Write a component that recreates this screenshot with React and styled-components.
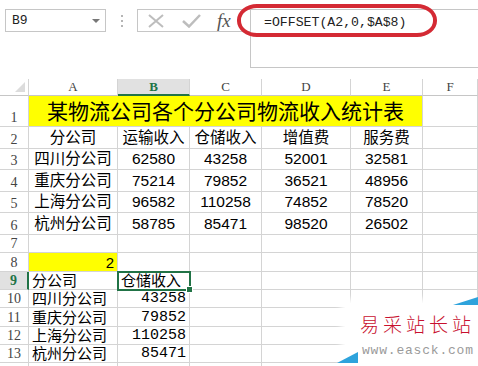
import React from 'react';
import styled, { createGlobalStyle } from 'styled-components';

const SANS = '"Liberation Sans", "Noto Sans CJK SC", sans-serif';
const MONO = '"Liberation Mono", "Noto Sans CJK SC", monospace';
const GREEN = '#217346';
const GRID = '#d4d4d4';

const GlobalStyle = createGlobalStyle`
  body {
    margin: 0;
    background: #fff;
    overflow: hidden;
  }
`;

const Page = styled.div`
  position: relative;
  width: 478px;
  height: 366px;
  overflow: hidden;
  background: #fff;
`;

const TopBar = styled.div`
  display: flex;
  align-items: flex-start;
  height: 79px;
  padding: 9px 0 0 5px;
  box-sizing: border-box;
`;

const NameBox = styled.div`
  box-sizing: border-box;
  width: 101px;
  height: 23px;
  border: 1px solid #c6c6c6;
  display: flex;
  align-items: center;
  justify-content: space-between;
  padding: 0 5px 0 6px;
  font-family: ${MONO};
  font-size: 13px;
  color: #222;
`;

const DropArrow = styled.span`
  width: 0;
  height: 0;
  border-left: 4px solid transparent;
  border-right: 4px solid transparent;
  border-top: 4px solid #777;
`;

const Grip = styled.div`
  width: 31px;
  height: 23px;
  display: flex;
  flex-direction: column;
  align-items: center;
  justify-content: center;
  gap: 3px;

  span {
    width: 2px;
    height: 2px;
    background: #b5b5b5;
  }
`;

const FormulaArea = styled.div`
  flex: 1;
  display: flex;
  position: relative;
`;

const FxButtons = styled.div`
  box-sizing: border-box;
  width: 113px;
  height: 23px;
  border: 1px solid #c6c6c6;
  border-right: none;
  display: flex;
  align-items: center;
  padding-left: 10px;
  gap: 18px;
`;

const FxLabel = styled.span`
  font-family: "Liberation Serif", serif;
  font-style: italic;
  font-size: 19px;
  color: #555;
  margin-left: -2px;
`;

const FormulaInput = styled.div`
  box-sizing: border-box;
  flex: 1;
  height: 59px;
  border: 1px solid #c6c6c6;
  border-right: none;
  padding: 5px 0 0 13px;
  font-family: ${MONO};
  font-size: 13.2px;
  color: #222;
`;

const Annotation = styled.div`
  position: absolute;
  left: 100px;
  top: -5px;
  width: 200px;
  height: 33px;
  box-sizing: border-box;
  border: 4px solid #d42a34;
  border-radius: 20px / 16px;
`;

const Sheet = styled.div`
  display: grid;
  grid-template-columns: 29px 89px 72px 72px 89px 72px 55px;
  grid-template-rows: 17px 31px 22px 21px 22px 21px 22px 18px 19px 18px 18px 19px 18px 18px 18px;
`;

const Corner = styled.div`
  box-sizing: border-box;
  border-right: 1px solid ${GRID};
  border-bottom: 1px solid #c6c6c6;
  display: flex;
  align-items: flex-end;
  justify-content: flex-end;
  padding: 0 3px 3px 0;
`;

const ColHead = styled.div`
  box-sizing: border-box;
  display: flex;
  align-items: center;
  justify-content: center;
  border-right: 1px solid ${GRID};
  border-bottom: ${p => (p.$active ? `2px solid ${GREEN}` : '1px solid #c6c6c6')};
  background: ${p => (p.$active ? '#e1e1e1' : '#fff')};
  color: ${p => (p.$active ? GREEN : '#444')};
  font-weight: ${p => (p.$active ? 700 : 400)};
  font-family: "Liberation Serif", serif;
  font-size: 13px;
`;

const RowHead = styled.div`
  box-sizing: border-box;
  display: flex;
  align-items: flex-end;
  justify-content: center;
  padding-bottom: 1px;
  border-right: ${p => (p.$active ? `2px solid ${GREEN}` : `1px solid ${GRID}`)};
  border-bottom: 1px solid ${GRID};
  background: ${p => (p.$active ? '#e1e1e1' : '#fff')};
  color: ${p => (p.$active ? GREEN : '#444')};
  font-weight: ${p => (p.$active ? 700 : 400)};
  font-family: "Liberation Serif", serif;
  font-size: 14px;
  line-height: 1;
`;

const Cell = styled.div`
  position: relative;
  box-sizing: border-box;
  grid-column: span ${p => p.$span || 1};
  display: flex;
  align-items: center;
  justify-content: ${p =>
    p.$align === 'right' ? 'flex-end' : p.$align === 'left' ? 'flex-start' : 'center'};
  padding: 0 3px;
  border-right: 1px solid ${GRID};
  border-bottom: 1px solid ${GRID};
  background: ${p => p.$bg || '#fff'};
  font-family: ${p => (p.$mono ? MONO : SANS)};
  font-size: ${p => p.$size || 15.5}px;
  line-height: 1;
  color: #000;
  white-space: nowrap;
  overflow: hidden;
  ${p => p.$selected && `outline: 2px solid ${GREEN}; outline-offset: -1px; overflow: visible; z-index: 2;`}
`;

const FillHandle = styled.span`
  position: absolute;
  right: -4px;
  bottom: -4px;
  width: 5px;
  height: 5px;
  background: ${GREEN};
  border: 1px solid #fff;
`;

const Watermark = styled.div`
  position: absolute;
  left: 345px;
  top: 303px;
  width: 140px;
  height: 66px;
  background: #fff;
  box-shadow: 0 0 6px 4px #fff;
  z-index: 5;
`;

const MarkTitle = styled.div`
  position: absolute;
  left: 15px;
  top: 11px;
  font-family: "Noto Sans CJK SC", sans-serif;
  font-weight: 300;
  font-size: 19px;
  letter-spacing: 4px;
  color: #c8102e;
  line-height: 1;
`;

const MarkUrl = styled.div`
  position: absolute;
  left: 17px;
  top: 41px;
  font-family: "Liberation Mono", monospace;
  font-size: 13px;
  letter-spacing: 0.8px;
  color: #9a9a9a;
  line-height: 1;
`;

const Triangle = styled.svg`
  position: absolute;
  left: ${p => p.$x}px;
  top: ${p => p.$y}px;
`;

const columns = ['A', 'B', 'C', 'D', 'E', 'F'];

const summary = [
  ['分公司', '运输收入', '仓储收入', '增值费', '服务费'],
  ['四川分公司', '62580', '43258', '52001', '32581'],
  ['重庆分公司', '75214', '79852', '36521', '48956'],
  ['上海分公司', '96582', '110258', '74852', '78520'],
  ['杭州分公司', '58785', '85471', '98520', '26502'],
];

const lookup = [
  ['四川分公司', '43258'],
  ['重庆分公司', '79852'],
  ['上海分公司', '110258'],
  ['杭州分公司', '85471'],
];

const Empty = ({ n }) => Array.from({ length: n }, (_, i) => <Cell key={i} />);

export default function App() {
  return (
    <Page>
      <GlobalStyle />
      <TopBar>
        <NameBox>
          B9
          <DropArrow />
        </NameBox>
        <Grip>
          <span />
          <span />
          <span />
        </Grip>
        <FormulaArea>
          <FxButtons>
            <svg width="16" height="14" viewBox="0 0 16 14">
              <path d="M1 1 L15 13 M15 1 L1 13" stroke="#bdbdbd" strokeWidth="2" fill="none" />
            </svg>
            <svg width="19" height="14" viewBox="0 0 19 14">
              <path d="M1 7 L7 12.5 L18 1" stroke="#bdbdbd" strokeWidth="2.5" fill="none" />
            </svg>
            <FxLabel>fx</FxLabel>
          </FxButtons>
          <FormulaInput>=OFFSET(A2,0,$A$8)</FormulaInput>
          <Annotation />
        </FormulaArea>
      </TopBar>

      <Sheet>
        <Corner>
          <svg width="10" height="10" viewBox="0 0 10 10">
            <path d="M10 0 L10 10 L0 10 Z" fill="#dcdcdc" />
          </svg>
        </Corner>
        {columns.map(c => (
          <ColHead key={c} $active={c === 'B'}>{c}</ColHead>
        ))}

        <RowHead>1</RowHead>
        <Cell $span={5} $bg="#ffff00" $size={21}>某物流公司各个分公司物流收入统计表</Cell>
        <Cell />

        {summary.map((row, i) => (
          <React.Fragment key={i}>
            <RowHead>{i + 2}</RowHead>
            {row.map((v, j) => (
              <Cell key={j}>{v}</Cell>
            ))}
            <Cell />
          </React.Fragment>
        ))}

        <RowHead>7</RowHead>
        <Empty n={6} />

        <RowHead>8</RowHead>
        <Cell $bg="#ffff00" $align="right" $size={15}>2</Cell>
        <Empty n={5} />

        <RowHead $active>9</RowHead>
        <Cell $align="left" $size={15}>分公司</Cell>
        <Cell $align="left" $size={15} $selected>
          仓储收入
          <FillHandle />
        </Cell>
        <Empty n={4} />

        {lookup.map(([name, val], i) => (
          <React.Fragment key={name}>
            <RowHead>{i + 10}</RowHead>
            <Cell $align="left" $size={15}>{name}</Cell>
            <Cell $align="right" $mono $size={15}>{val}</Cell>
            <Empty n={4} />
          </React.Fragment>
        ))}

        <RowHead />
        <Empty n={6} />
      </Sheet>

      <Watermark>
        <Triangle $x={108} $y={-6} width="25" height="8" viewBox="0 0 25 8">
          <path d="M0 8 L25 0 L25 8 Z" fill="#2ea3dc" />
        </Triangle>
        <Triangle $x={-8} $y={49} width="21" height="11" viewBox="0 0 21 11">
          <path d="M0 11 L21 0 L21 11 Z" fill="#2ea3dc" />
        </Triangle>
        <MarkTitle>易采站长站</MarkTitle>
        <MarkUrl>www.easck.com</MarkUrl>
      </Watermark>
    </Page>
  );
}
